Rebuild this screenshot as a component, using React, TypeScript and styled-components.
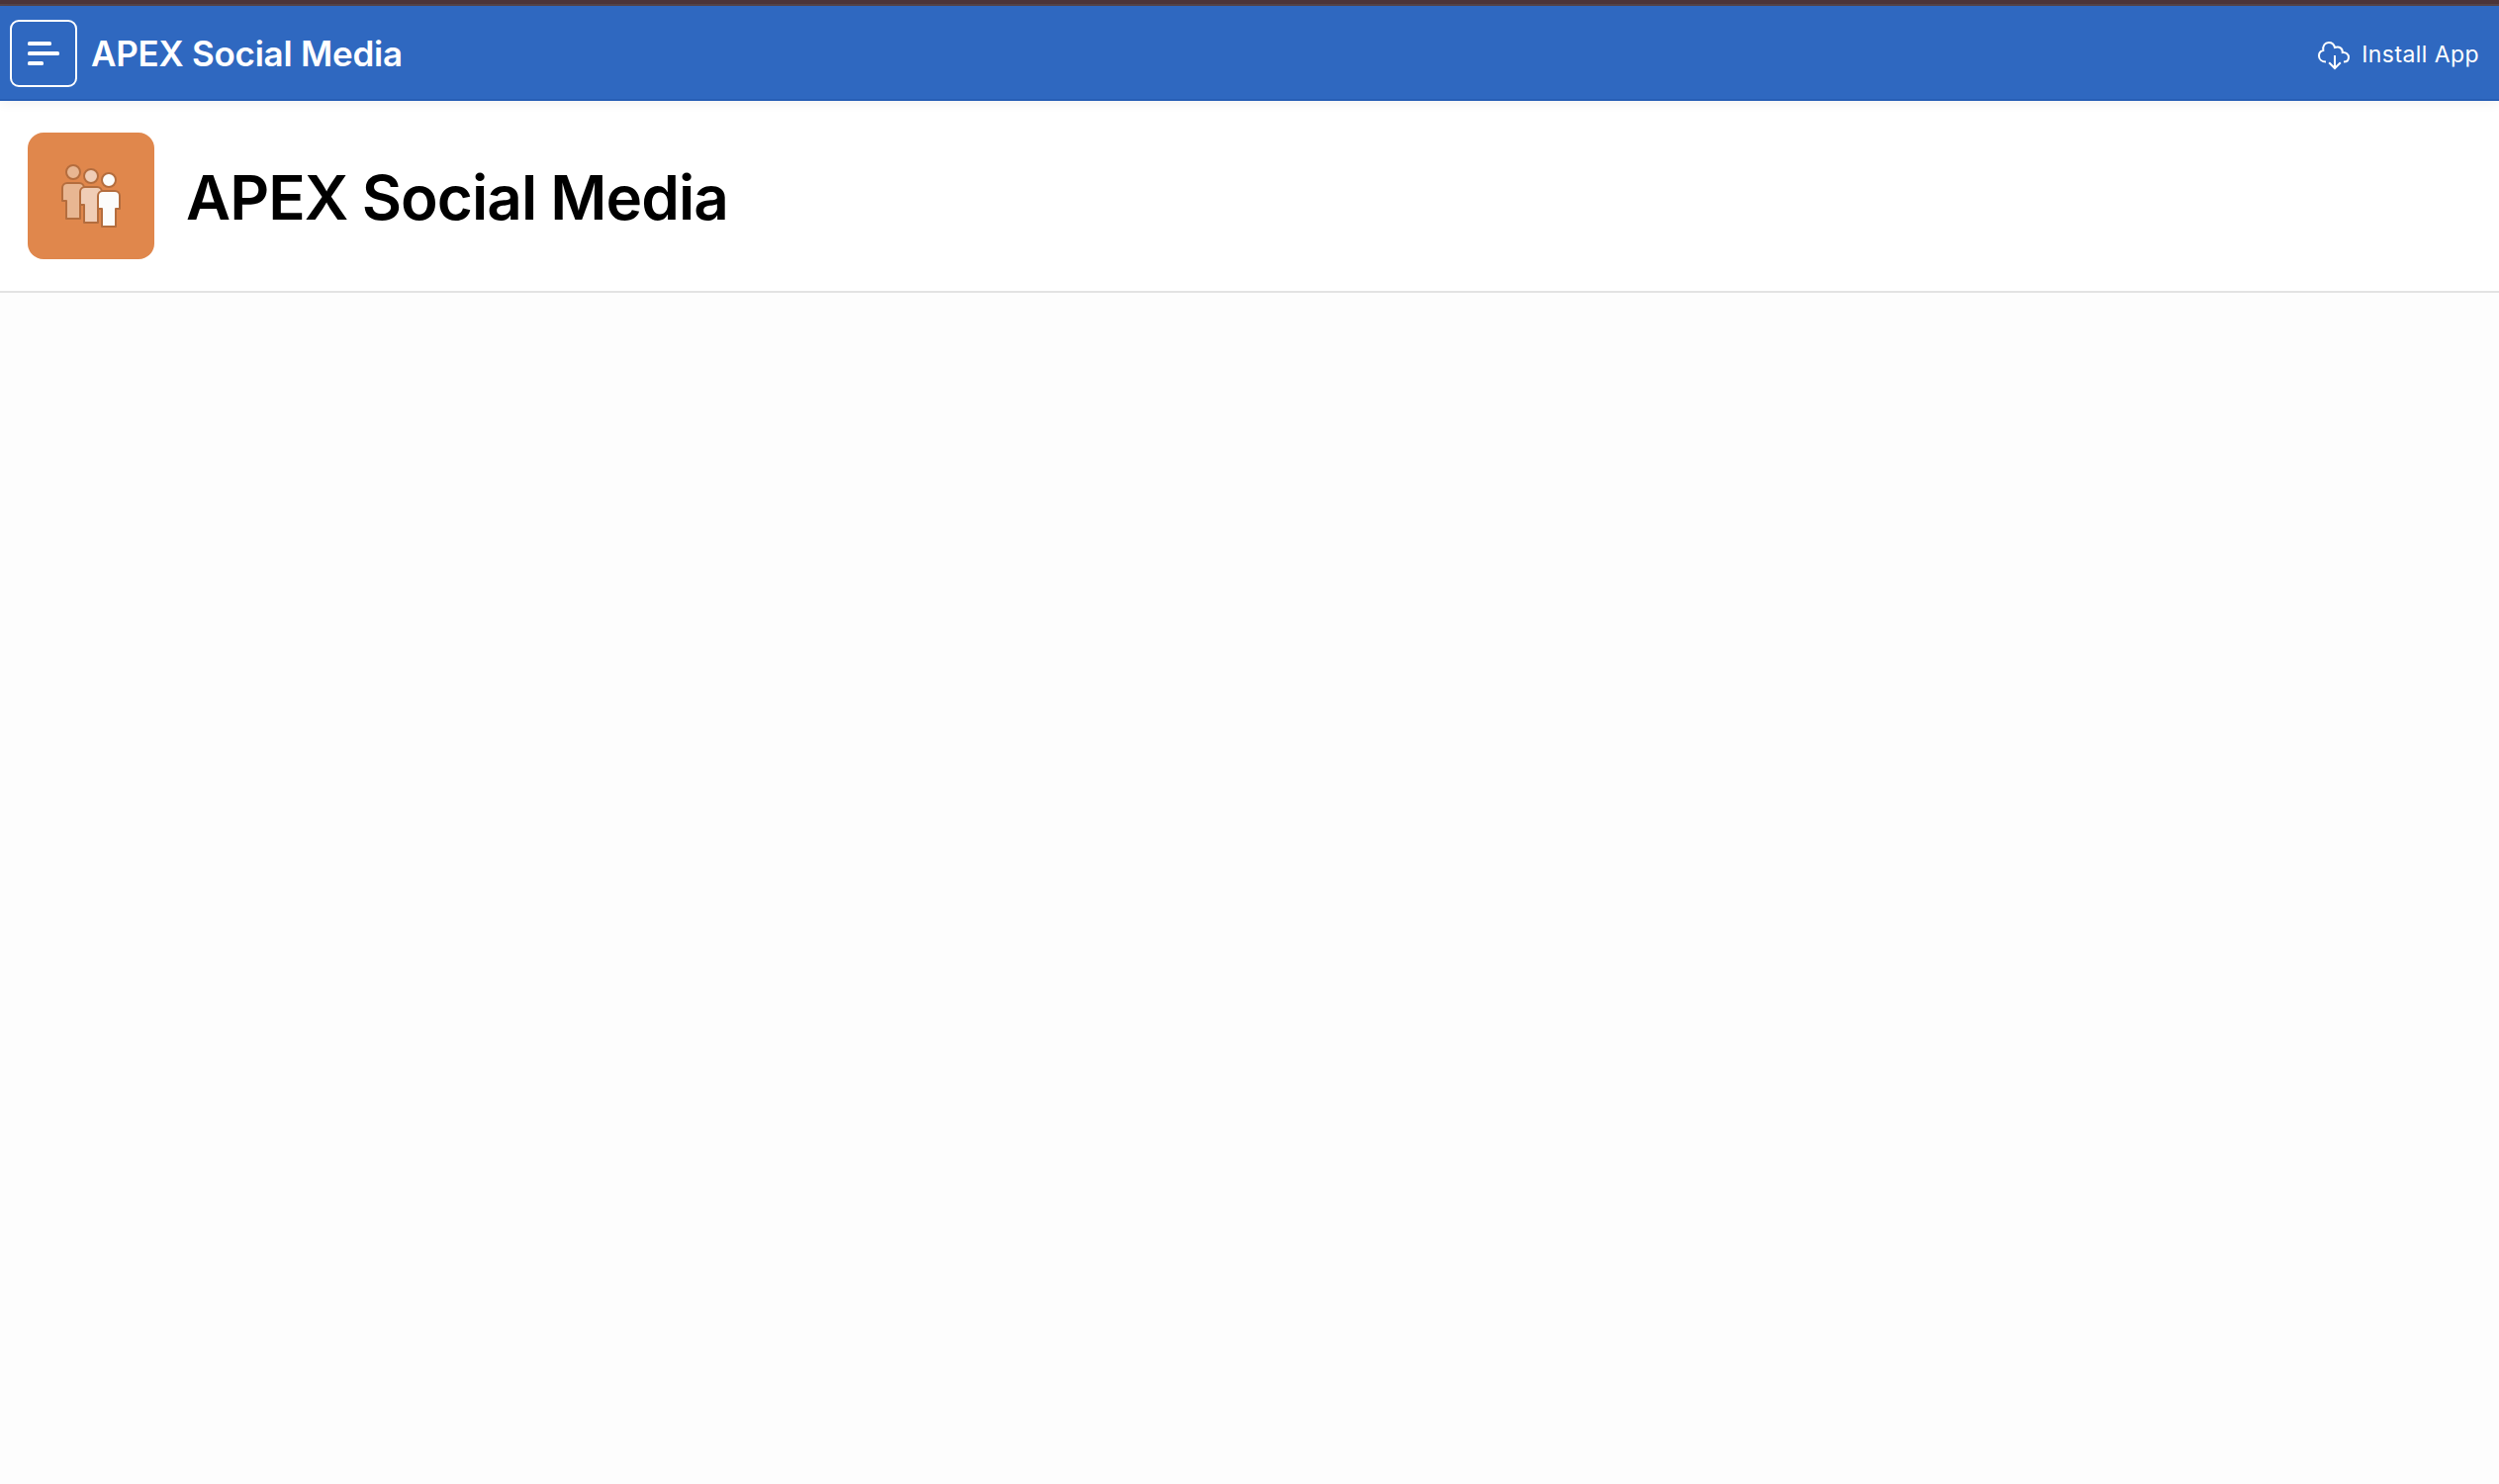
import React from "react";
import styled, { createGlobalStyle } from "styled-components";

const GlobalStyle = createGlobalStyle`
  *, *::before, *::after { box-sizing: border-box; }
  html, body { margin: 0; background: #fdfdfd; }
  body { font-family: Inter, "Liberation Sans", sans-serif; overflow: hidden; }
`;

const Page = styled.div`
  display: flex;
  flex-direction: column;
  min-height: 1500px;
`;

const BrowserEdge = styled.div`
  height: 6px;
  background: #4d3539;
  border-bottom: 2px solid #55454a;
`;

const Header = styled.header`
  display: flex;
  align-items: center;
  height: 96px;
  padding: 0 20px 0 10px;
  background: #2f68c0;
  border-bottom: 2px solid #275eb5;
  color: #fff;
  box-shadow: 0 2px 12px rgba(0, 0, 0, 0.06);
  z-index: 1;
`;

const NavToggle = styled.button`
  display: flex;
  align-items: center;
  justify-content: center;
  width: 68px;
  height: 68px;
  margin: 2px 14px 0 0;
  padding: 0;
  border: 2px solid #fff;
  border-radius: 9px;
  background: transparent;
  color: inherit;
`;

const AppName = styled.span`
  flex: 1;
  padding-top: 1px;
  font-size: 35px;
  font-weight: 600;
  line-height: 48px;
  letter-spacing: -0.25px;
  white-space: nowrap;
`;

const InstallLink = styled.a`
  display: flex;
  align-items: center;
  gap: 12px;
  padding-top: 3px;
  font-size: 23px;
  font-weight: 400;
  line-height: 32px;
  letter-spacing: 0.42px;
  white-space: nowrap;

  svg {
    margin-top: 2px;
  }
`;

const Hero = styled.section`
  display: flex;
  align-items: center;
  gap: 32px;
  height: 194px;
  padding: 0 28px 2px;
  background: #fff;
  border-bottom: 2px solid #e3e3e3;
`;

const HeroIcon = styled.div`
  display: flex;
  width: 128px;
  height: 128px;
  margin-top: 2px;
  border-radius: 16px;
  background: #e0874c;
`;

const HeroTitle = styled.h1`
  margin: 0;
  padding-top: 6px;
  color: #000;
  font-size: 62px;
  font-weight: 600;
  line-height: 80px;
  letter-spacing: -0.95px;
  word-spacing: -0.5px;
  white-space: nowrap;
`;

const Content = styled.main`
  flex: 1;
  background: #fdfdfd;
`;

const MenuIcon = () => (
  <svg width="32" height="24" viewBox="0 0 32 24" fill="currentColor">
    <rect width="24" height="4" rx="1.6" />
    <rect y="10" width="32" height="4" rx="1.6" />
    <rect y="20" width="16" height="4" rx="1.6" />
  </svg>
);

const CloudDownloadIcon = () => (
  <svg width="32" height="32" viewBox="0 0 32 32" fill="none" stroke="currentColor" strokeWidth="2">
    <path d="M8 22.500C4 22.500 1 20 1 16.500C1 13.500 3 11.500 5.300 11C4.600 6.300 7 3 10.900 3C14 3 16.300 5 17 8C21.500 6.200 25 9 24.800 13C28.500 12.500 31 15 31 18C31 20.700 29 22.500 26 22.500" />
    <path d="M17 16V29M11.200 23.300L17 29L22.800 23.300" />
  </svg>
);

const people = ["#e8b692", "#f0cdb6", "#fcfcfb"];

const PeopleIcon = () => (
  <svg width="128" height="128" viewBox="28 134 128 128" stroke="#b46d3e" strokeWidth="2">
    {people.map((fill, i) => (
      <g key={fill} fill={fill} strokeLinejoin="round" transform={`translate(${i * 18} ${i * 4})`}>
        <circle cx="74" cy="174" r="7" />
        <path d="M68 185H80A5 5 0 0 1 85 190V203H81V221H67V203H63V190A5 5 0 0 1 68 185Z" />
      </g>
    ))}
  </svg>
);

export default function App() {
  return (
    <>
      <GlobalStyle />
      <Page>
        <BrowserEdge />
        <Header>
          <NavToggle aria-label="Navigation">
            <MenuIcon />
          </NavToggle>
          <AppName>APEX Social Media</AppName>
          <InstallLink>
            <CloudDownloadIcon />
            Install App
          </InstallLink>
        </Header>
        <Hero>
          <HeroIcon>
            <PeopleIcon />
          </HeroIcon>
          <HeroTitle>APEX Social Media</HeroTitle>
        </Hero>
        <Content />
      </Page>
    </>
  );
}
